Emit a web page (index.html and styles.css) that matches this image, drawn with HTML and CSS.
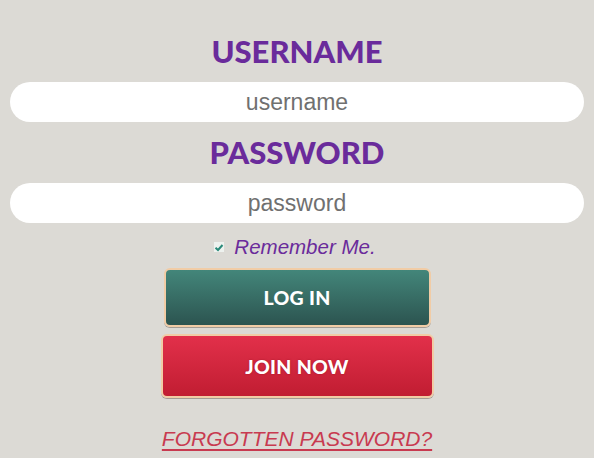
FILE: index.html
```html
<!DOCTYPE html>
<html>
<head>
<meta charset="utf-8">
<link rel="stylesheet" href="styles.css">
</head>
<body>
<form class="login">
  <label class="heading" for="u">USERNAME</label>
  <input class="field" id="u" type="text" placeholder="username">
  <label class="heading" for="p">PASSWORD</label>
  <input class="field" id="p" type="password" placeholder="password">
  <div class="remember">
    <span class="check"><svg width="10" height="9" viewBox="0 0 10 9"><path d="M1.5 4.8 L4 7 L8.5 2" fill="none" stroke="#2a8a7a" stroke-width="2"/></svg></span>
    <span class="remember-text">Remember Me.</span>
  </div>
  <button type="button" class="btn btn-login"><span>LOG IN</span></button>
  <button type="button" class="btn btn-join"><span>JOIN NOW</span></button>
  <a class="forgot" href="#">FORGOTTEN PASSWORD?</a>
</form>
</body>
</html>
```
FILE: styles.css
```css
html, body {
  margin: 0;
  padding: 0;
  background: #dcdad5;
  height: 100%;
}
.login {
  display: flex;
  flex-direction: column;
  align-items: center;
  padding: 33px 10px 0;
}
.heading {
  font-family: "Lato", sans-serif;
  font-weight: 900;
  font-size: 31px;
  line-height: 36px;
  color: #6a2b9b;
  letter-spacing: 0;
}
.field {
  box-sizing: border-box;
  width: 100%;
  height: 40px;
  border: none;
  border-radius: 20px;
  background: #fff;
  text-align: center;
  font-family: "Liberation Sans", Arial, sans-serif;
  font-size: 23px;
  color: #555;
  outline: none;
  margin: 13px 0 12px;
  padding: 0;
}
.field::placeholder {
  color: #707070;
}
.remember {
  display: flex;
  align-items: center;
  gap: 10px;
  height: 24px;
  margin-right: 4px;
}
.check {
  width: 10px;
  height: 10px;
  background: #eef2ef;
  display: flex;
  align-items: center;
  justify-content: center;
}
.remember-text {
  font-family: "Liberation Sans", Arial, sans-serif;
  font-style: italic;
  font-size: 20.5px;
  color: #6a2b9b;
}
.btn {
  box-sizing: border-box;
  border: 2px solid #f1cca6;
  border-radius: 6px;
  padding: 0;
  font-family: "Lato", sans-serif;
  font-weight: 900;
  font-size: 19.5px;
  color: #fff;
  letter-spacing: 0.3px;
  cursor: pointer;
  box-shadow: 0 1px 0 rgba(60, 40, 30, 0.35);
}
.btn-login {
  width: 267px;
  height: 59px;
  margin-top: 9px;
  background: linear-gradient(#43867a, #2c5450);
}
.btn-join {
  width: 273px;
  height: 64px;
  margin-top: 7px;
  background: linear-gradient(#e2304a, #c11d32);
  text-shadow: 0 0 2px rgba(120, 0, 20, 0.5);
}
.forgot {
  margin-top: 29px;
  font-family: "Liberation Sans", Arial, sans-serif;
  font-style: italic;
  font-size: 21px;
  line-height: 24px;
  color: #c83a50;
  text-decoration: underline;
  text-decoration-thickness: 2px;
  text-underline-offset: 3px;
}
```
